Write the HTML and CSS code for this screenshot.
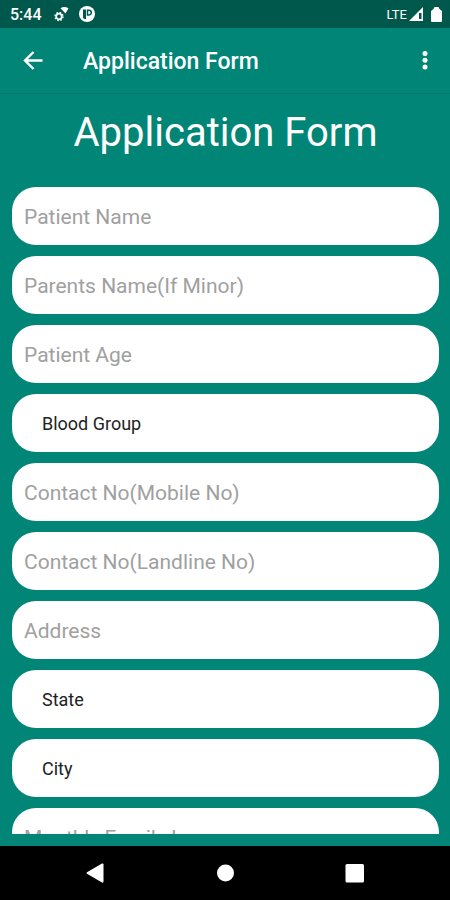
FILE: index.html
```html
<!DOCTYPE html>
<html lang="en">
<head>
    <meta charset="UTF-8">
    <meta name="viewport" content="width=device-width, initial-scale=1.0">
    <title>Application Form</title>
    <link rel="stylesheet" href="styles.css">
</head>
<body>
    <div class="status-bar">
        <span class="time">5:44</span>
        <svg class="status-icon" width="16" height="16" viewBox="0 0 16 16" aria-hidden="true">
            <circle cx="5" cy="10.500" r="2.800" fill="none" stroke="#fff" stroke-width="1.800"/>
            <circle cx="5" cy="10.500" r="4" fill="none" stroke="#fff" stroke-width="1.400" stroke-dasharray="1.600 1.550"/>
            <path d="M6.500 2.200Q10 0 14.500 2.200L11.500 7.500Z" fill="#fff"/>
        </svg>
        <svg class="status-icon" width="16" height="16" viewBox="0 0 16 16" aria-hidden="true">
            <circle cx="8" cy="8" r="8" fill="#fff"/>
            <path d="M4 3.500h3v9.500H5.500L4 12Z" fill="#00574b"/>
            <path d="M8.500 4.300h1.500a2.300 2.300 0 0 1 0 4.600h-1.500Z" fill="#fff" stroke="#00574b" stroke-width="1.500"/>
        </svg>
        <span class="network">LTE</span>
        <svg width="14" height="14" viewBox="0 0 14 14" aria-hidden="true">
            <path d="M14 0V14H0Z" fill="#fff"/>
            <path d="M10 6h2.500v6H10Z" fill="#00574b"/>
        </svg>
        <svg class="battery" width="11" height="15" viewBox="0 0 11 15" aria-hidden="true">
            <path d="M3.500 0h4l1 2 2.500 2v10q0 1-1 1H1q-1 0-1-1V4l2.500-2Z" fill="#fff"/>
        </svg>
    </div>

    <header class="app-bar">
        <button class="icon-btn" type="button" aria-label="Back">
            <svg width="20" height="20" viewBox="0 0 20 20" fill="none" stroke="#fff" stroke-width="2.400">
                <path d="M19.500 9.500H2M10.500 1L2 9.500l8.500 8.500"/>
            </svg>
        </button>
        <div class="app-title">Application Form</div>
        <button class="icon-btn" type="button" aria-label="More options">
            <svg width="6" height="20" viewBox="0 0 6 20" fill="#fff">
                <circle cx="3" cy="2.500" r="2.500"/>
                <circle cx="3" cy="9.300" r="2.500"/>
                <circle cx="3" cy="16" r="2.500"/>
            </svg>
        </button>
    </header>

    <main class="content">
        <h1>Application Form</h1>
        <form class="form">
            <input class="field" type="text" placeholder="Patient Name" aria-label="Patient Name">
            <input class="field" type="text" placeholder="Parents Name(If Minor)" aria-label="Parents Name(If Minor)">
            <input class="field" type="text" placeholder="Patient Age" aria-label="Patient Age">
            <select class="field select" aria-label="Blood Group">
                <option>Blood Group</option>
            </select>
            <input class="field" type="tel" placeholder="Contact No(Mobile No)" aria-label="Contact No(Mobile No)">
            <input class="field" type="tel" placeholder="Contact No(Landline No)" aria-label="Contact No(Landline No)">
            <input class="field" type="text" placeholder="Address" aria-label="Address">
            <select class="field select" aria-label="State">
                <option>State</option>
            </select>
            <select class="field select" aria-label="City">
                <option>City</option>
            </select>
            <input class="field" type="text" placeholder="Monthly Family Income" aria-label="Monthly Family Income">
        </form>
    </main>

    <nav class="nav-bar">
        <button class="nav-btn" type="button" aria-label="Back">
            <svg width="20" height="20" viewBox="0 0 20 20" fill="#fff">
                <path d="M17 0.500Q18.500 0 18.500 1.500v17q0 1.500-1.500 1L2 10.800q-1-.8 0-1.600Z"/>
            </svg>
        </button>
        <button class="nav-btn" type="button" aria-label="Home">
            <svg width="20" height="20" viewBox="0 0 20 20" fill="#fff">
                <circle cx="10.500" cy="10" r="8.500"/>
            </svg>
        </button>
        <button class="nav-btn" type="button" aria-label="Recent apps">
            <svg width="20" height="20" viewBox="0 0 20 20" fill="#fff">
                <rect x="0.500" y="1" width="18.500" height="18.500" rx="1.500"/>
            </svg>
        </button>
    </nav>
</body>
</html>
```
FILE: styles.css
```css
* {
    box-sizing: border-box;
}

body {
    margin: 0;
    height: 100vh;
    display: flex;
    flex-direction: column;
    background-color: #008577;
    color: #fff;
    font-family: Roboto, sans-serif;
    overflow: hidden;
}

button {
    display: flex;
    align-items: center;
    justify-content: center;
    padding: 0;
    border: none;
    background: none;
    cursor: pointer;
}

.status-bar {
    flex: none;
    display: flex;
    align-items: center;
    height: 28px;
    padding: 0 8px 0 10px;
    background-color: #00574b;
}

.time {
    font-size: 16px;
    font-weight: 500;
    line-height: 20px;
    padding-top: 1px;
    margin-right: 12px;
}

.status-icon {
    margin-right: 9px;
}

.network {
    margin-left: auto;
    margin-right: 2px;
    font-size: 13px;
}

.battery {
    margin-left: 8px;
}

.app-bar {
    flex: none;
    display: flex;
    align-items: center;
    height: 66px;
    border-bottom: 1px solid #007a6d;
}

.icon-btn {
    width: 50px;
    height: 50px;
}

.app-bar .icon-btn:first-child {
    width: 66px;
}

.app-title {
    flex: 1;
    padding-top: 2px;
    padding-left: 17px;
    font-size: 23px;
    font-weight: 500;
}

.content {
    flex: 1;
    min-height: 0;
    display: flex;
    flex-direction: column;
    padding: 0 11px 12px 12px;
}

h1 {
    flex: none;
    margin: 15px 0 30px;
    font-size: 40px;
    font-weight: 400;
    line-height: 48px;
    text-align: center;
}

.form {
    flex: 1;
    min-height: 0;
    display: flex;
    flex-direction: column;
    gap: 11px;
    overflow: hidden;
}

.field {
    flex: none;
    width: 100%;
    height: 58px;
    padding: 1px 12px 0;
    border: none;
    border-radius: 24px;
    background-color: #fff;
    color: #222;
    font-family: inherit;
    font-size: 21px;
}

.field::placeholder {
    color: #a0a0a0;
    opacity: 1;
}

.select {
    appearance: none;
    padding: 0 30px;
    font-size: 18px;
}

.nav-bar {
    flex: none;
    display: flex;
    justify-content: space-around;
    align-items: center;
    height: 54px;
    padding: 0 30px;
    background-color: #000;
}

.nav-btn {
    width: 60px;
    height: 54px;
}
```
